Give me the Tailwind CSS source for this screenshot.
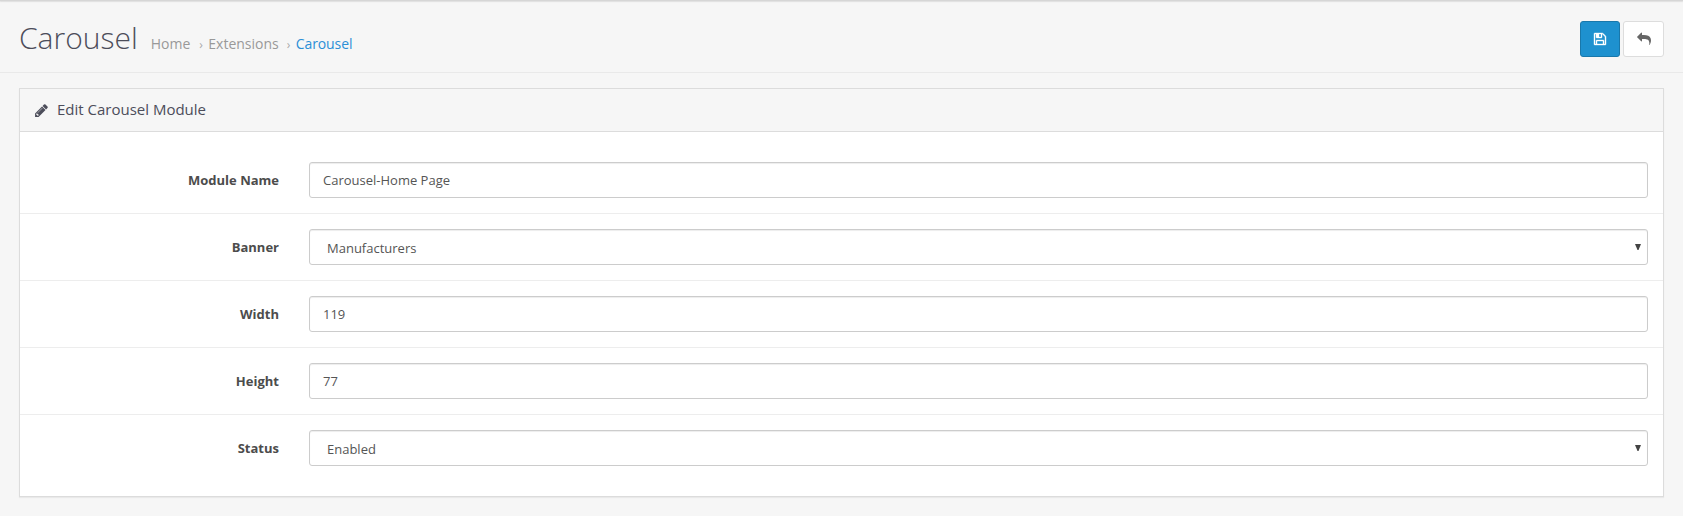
<!DOCTYPE html>
<html lang="en">
<head>
<meta charset="utf-8">
<title>Carousel</title>
<script src="https://cdn.jsdelivr.net/npm/@tailwindcss/browser@4"></script>
</head>
<body class="h-[516px] overflow-hidden bg-[#f6f6f6] font-['Open_Sans',sans-serif] text-[13px] text-[#4c4c4c]">
<div class="h-px bg-[#d6d6d6] shadow-[0_1px_1px_#dedede]"></div>
<header class="flex h-[72px] justify-between border-b border-[#e9e9e9] pt-5 pr-[19px] pl-[19px]">
  <div class="flex h-[34px] items-baseline">
    <h1 class="text-[30px] leading-[34px] font-light text-[#4c4d5a]">Carousel</h1>
    <nav class="ml-[13px] flex items-baseline text-[14px] leading-5 text-[#999999]">
      <a>Home</a><span class="w-[18px] pl-[9px] text-[12px] text-[#aaaaaa]">›</span><a>Extensions</a><span class="w-[17px] pl-[8px] text-[12px] text-[#aaaaaa]">›</span><a class="tracking-[-0.1px] text-[#2b8fd6]">Carousel</a>
    </nav>
  </div>
  <div class="flex gap-[3px]">
    <button aria-label="Save" class="flex h-9 w-10 items-center justify-center rounded-[3px] border border-[#1978ab] bg-[#1e91cf] text-white">
      <svg class="size-[14px]" viewBox="0 0 1792 1792" fill="currentColor" stroke="currentColor" stroke-width="50"><path d="M512 1536h768v-384h-768v384zm896 0h128v-896q0-14-10-38.500t-20-34.500l-281-281q-10-10-34-20t-39-10v416q0 40-28 68t-68 28h-576q-40 0-68-28t-28-68v-416h-128v1280h128v-416q0-40 28-68t68-28h832q40 0 68 28t28 68v416zm-384-928v-320q0-13-9.500-22.500t-22.500-9.500h-192q-13 0-22.500 9.500t-9.500 22.500v320q0 13 9.500 22.500t22.500 9.500h192q13 0 22.500-9.500t9.500-22.500zm640 32v928q0 40-28 68t-68 28h-1344q-40 0-68-28t-28-68v-1344q0-40 28-68t68-28h928q40 0 88 20t76 48l280 280q28 28 48 76t20 88z"/></svg>
    </button>
    <button aria-label="Cancel" class="flex h-9 w-[41px] items-center justify-center rounded-[3px] border border-[#dddddd] bg-white text-[#666666]">
      <svg class="size-[14px]" viewBox="0 0 1792 1792" fill="currentColor"><path d="M1792 1120q0 166-127 451-3 7-10.500 24t-13.500 30-13 22q-12 17-28 17-15 0-23.500-10t-8.500-25q0-9 2.500-26.500t2.500-23.500q5-68 5-123 0-101-17.500-181t-48.500-138.500-80-101-105.500-69.500-133-42.500-154-21.500-175.500-6h-224v256q0 26-19 45t-45 19-45-19l-512-512q-19-19-19-45t19-45l512-512q19-19 45-19t45 19 19 45v256h224q713 0 875 403 53 134 53 333z"/></svg>
    </button>
  </div>
</header>
<main class="px-[19px] pt-[15px]">
  <section class="h-[409px] border border-[#dcdcdc] bg-white shadow-[0_1px_1px_rgba(0,0,0,0.05)]">
    <div class="flex h-[43px] items-center border-b border-[#dcdcdc] bg-[#f6f6f6] pl-[14px] text-[#4c4d5a]">
      <svg class="size-[15px]" viewBox="0 0 1792 1792" fill="currentColor"><path d="M491 1536l91-91-235-235-91 91v107h128v128h107zm523-928q0-22-22-22-10 0-17 7l-542 542q-7 7-7 17 0 22 22 22 10 0 17-7l542-542q7-7 7-17zm-54-192l416 416-832 832h-416v-416l832-832zm683 96q0 53-37 90l-166 166-416-416 166-165q36-38 90-38 53 0 91 38l235 234q37 39 37 91z"/></svg>
      <h2 class="ml-2 pb-0.5 text-[15px] leading-5">Edit Carousel Module</h2>
    </div>
    <form class="flex flex-col divide-y divide-[#ededed] py-[15px]">
      <div class="flex items-center py-[15px] pr-[15px]">
        <label class="w-[289px] pt-0.5 pr-[30px] text-right font-bold">Module Name</label>
        <div class="flex h-9 flex-1 items-center rounded-[3px] border border-[#cccccc] pt-0.5 pl-[13px] text-[#555555] shadow-[inset_0_1px_1px_rgba(0,0,0,0.075)]">Carousel-Home Page</div>
      </div>
      <div class="flex items-center py-[15px] pr-[15px]">
        <label class="w-[289px] pt-0.5 pr-[30px] text-right font-bold">Banner</label>
        <div class="flex h-9 flex-1 items-center justify-between rounded-[3px] border border-[#cccccc] pr-[6px] pl-[17px] text-[#555555] shadow-[inset_0_1px_1px_rgba(0,0,0,0.075)]"><span class="pt-1">Manufacturers</span><svg class="mb-px h-[6px] w-[6px]" viewBox="0 0 6 6" fill="#444"><path d="M0 0h6L3.500 6h-1z"/></svg></div>
      </div>
      <div class="flex items-center py-[15px] pr-[15px]">
        <label class="w-[289px] pt-0.5 pr-[30px] text-right font-bold">Width</label>
        <div class="flex h-9 flex-1 items-center rounded-[3px] border border-[#cccccc] pt-0.5 pl-[13px] text-[#555555] shadow-[inset_0_1px_1px_rgba(0,0,0,0.075)]">119</div>
      </div>
      <div class="flex items-center py-[15px] pr-[15px]">
        <label class="w-[289px] pt-0.5 pr-[30px] text-right font-bold">Height</label>
        <div class="flex h-9 flex-1 items-center rounded-[3px] border border-[#cccccc] pt-0.5 pl-[13px] text-[#555555] shadow-[inset_0_1px_1px_rgba(0,0,0,0.075)]">77</div>
      </div>
      <div class="flex items-center py-[15px] pr-[15px]">
        <label class="w-[289px] pt-0.5 pr-[30px] text-right font-bold">Status</label>
        <div class="flex h-9 flex-1 items-center justify-between rounded-[3px] border border-[#cccccc] pr-[6px] pl-[17px] text-[#555555] shadow-[inset_0_1px_1px_rgba(0,0,0,0.075)]"><span class="pt-1">Enabled</span><svg class="mb-px h-[6px] w-[6px]" viewBox="0 0 6 6" fill="#444"><path d="M0 0h6L3.500 6h-1z"/></svg></div>
      </div>
    </form>
  </section>
</main>
</body>
</html>
